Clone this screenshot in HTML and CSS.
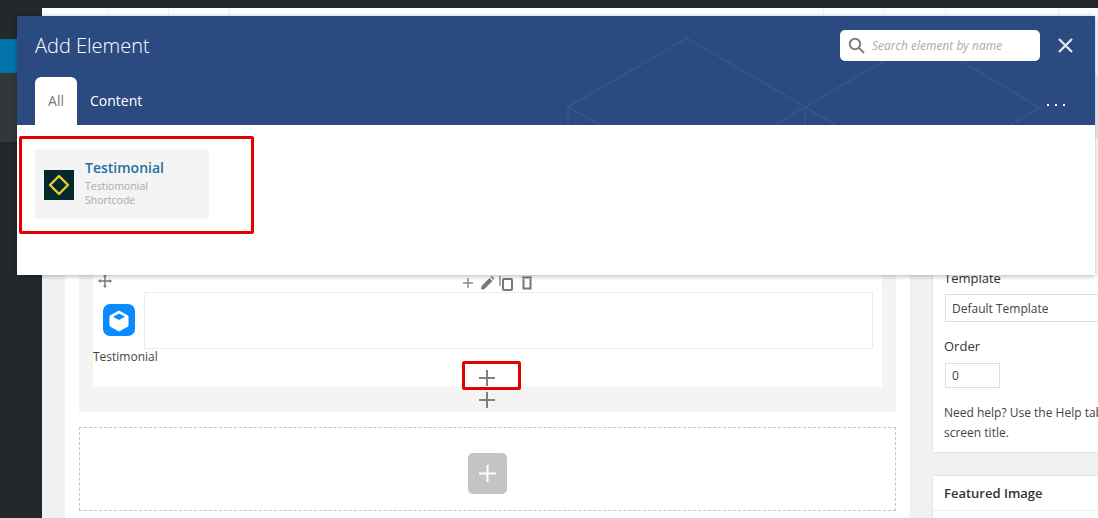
FILE: index.html
```html
<!DOCTYPE html>
<html lang="en">
<head>
<meta charset="utf-8"/>
<title>Add Element</title>
<link rel="stylesheet" href="styles.css">
</head>
<body>
<div class="admin-bar"></div>
<div class="layout">
  <div class="sidebar">
    <div class="menu-active"></div>
    <div class="menu-sub"></div>
  </div>
  <div class="content">
    <div class="toolbar">
      <span class="cell c1"></span><span class="cell c2"></span><span class="cell c3"></span>
      <span class="cell c4"></span><span class="cell c5"></span><span class="cell c6"></span><span class="cell c7"></span>
    </div>
    <div class="columns">
      <div class="main-box">
        <div class="section">
          <div class="row">
            <div class="row-controls">
              <svg class="move" width="14" height="14" viewBox="0 0 14 14"><path d="M7 0 9 2.500H7.700V6.300H11.500V5L14 7 11.500 9V7.700H7.700V11.500H9L7 14 5 11.500H6.300V7.700H2.500V9L0 7 2.500 5V6.300H6.300V2.500H5Z"/></svg>
              <div class="row-tools">
                <svg width="12" height="12" viewBox="0 0 12 12"><path d="M6 1V11M1 6H11" class="line"/></svg>
                <svg class="pencil" width="16" height="16" viewBox="0 0 16 16"><path d="M2 14.500 2.600 11 10.500 3 13.500 6 5.500 14ZM11.500 2 12.800 1 15 3.200 14.500 5Z"/></svg>
                <svg width="16" height="16" viewBox="0 0 16 16"><path d="M1 1V11" class="line"/><rect x="4" y="4" width="9" height="11" rx="1" class="thick"/></svg>
                <svg class="trash" width="12" height="14" viewBox="0 0 12 14"><path d="M1 0.500H11V2.500H1Z"/><path d="M2.500 3V12.500H9.500V3" class="thick"/></svg>
              </div>
            </div>
            <div class="row-body">
              <div class="element">
                <svg class="cube" width="32" height="32" viewBox="0 0 32 32">
                  <rect width="32" height="32" rx="7" fill="#0a8aff"/>
                  <path d="M16 7 25 12V22L16 27 7 22V12Z" fill="#fff" stroke="#fff" stroke-width="1" stroke-linejoin="round"/>
                  <path d="M16 9.500 22 12.800 16 16 10 12.800Z" fill="#0a8aff"/>
                </svg>
              </div>
              <div class="drop-area"></div>
            </div>
            <div class="element-name">Testimonial</div>
            <div class="row-add">
              <svg width="16" height="16" viewBox="0 0 16 16"><path d="M8 0V16M0 8H16" class="plus"/></svg>
            </div>
          </div>
          <div class="section-add">
            <svg width="16" height="16" viewBox="0 0 16 16"><path d="M8 0V16M0 8H16" class="plus"/></svg>
          </div>
        </div>
        <div class="empty-section">
          <div class="add-btn">
            <svg width="17" height="17" viewBox="0 0 17 17"><path d="M8.500 0V17M0 8.500H17" class="plus-white"/></svg>
          </div>
        </div>
      </div>
      <div class="side">
        <div class="panel attrs">
          <div class="field-label">Template</div>
          <div class="select-box">Default Template</div>
          <div class="field-label order-label">Order</div>
          <div class="order-input">0</div>
          <p class="help">Need help? Use the Help tab above the screen title.</p>
        </div>
        <div class="panel featured">
          <div class="panel-title">Featured Image</div>
        </div>
      </div>
    </div>
  </div>
</div>

<div class="modal">
  <div class="modal-head">
    <svg class="pattern" width="1078" height="109" viewBox="0 0 1078 109">
      <path d="M551 109V91L670 22 788 91V109M551 91 583 109M788 91 758 109M788 91 818 109M788 91 906 22 1023 92 993 109"/>
    </svg>
    <div class="head-top">
      <div class="modal-title">Add Element</div>
      <label class="search">
        <svg width="17" height="17" viewBox="0 0 17 17"><circle cx="7" cy="7" r="5.200"/><path d="M11 11 16 16"/></svg>
        <input type="text" placeholder="Search element by name"/>
      </label>
      <svg class="close" width="15" height="15" viewBox="0 0 15 15"><path d="M1 1 14 14M14 1 1 14"/></svg>
    </div>
    <div class="tabs">
      <div class="tab active">All</div>
      <div class="tab">Content</div>
      <div class="dots"><span></span><span></span><span></span></div>
    </div>
  </div>
  <div class="modal-body">
    <div class="el-card">
      <svg class="el-icon" width="30" height="30" viewBox="0 0 30 30">
        <rect width="30" height="30" fill="#04282c"/>
        <path d="M15 6 24 15 15 24 6 15Z" fill="none" stroke="#e6d02c" stroke-width="2.400" stroke-linejoin="round"/>
      </svg>
      <div class="el-text">
        <div class="el-title">Testimonial</div>
        <div class="el-desc">Testiomonial Shortcode</div>
      </div>
    </div>
  </div>
</div>
<div class="mark mark-card"></div>
<div class="mark mark-add"></div>
</body>
</html>
```

FILE: styles.css
```css
html, body {
  margin: 0;
  height: 518px;
  overflow: hidden;
}
body {
  position: relative;
  background: #f1f1f1;
  font-family: "Open Sans", sans-serif;
  font-size: 12px;
  color: #444;
}
.admin-bar {
  height: 8px;
  background: #23282d;
}
.layout {
  display: flex;
  height: 510px;
}
.sidebar {
  width: 42px;
  flex-shrink: 0;
  background: #23282d;
  padding-top: 31px;
  box-sizing: border-box;
}
.menu-active {
  height: 34px;
  background: #0073aa;
}
.menu-sub {
  height: 69px;
  background: #32373c;
}
.content {
  flex: 1;
  min-width: 0;
}
.toolbar {
  height: 69px;
  background: #fdfdfd;
  border-bottom: 1px solid #e5e5e5;
  box-sizing: border-box;
  display: flex;
}
.cell {
  height: 100%;
  border-right: 1px solid #f1f1f1;
  box-sizing: border-box;
}
.c1 { width: 66px; }
.c2, .c3 { width: 61px; }
.c4 { width: 594px; }
.c5, .c6 { width: 61px; }
.c7 { width: 113px; }

.columns {
  display: flex;
  padding: 60px 0 0 23px;
}
.main-box {
  width: 845px;
  flex-shrink: 0;
  height: 400px;
  background: #fff;
  box-sizing: border-box;
  padding: 103px 14px 0;
}
.section {
  background: #f4f4f4;
  padding: 15px 14px 0;
  height: 172px;
  box-sizing: border-box;
}
.row {
  background: #fff;
  height: 132px;
  padding-top: 18px;
  box-sizing: border-box;
}
.row-controls {
  display: flex;
  align-items: center;
  height: 19px;
  padding-left: 5px;
}
.row-controls svg {
  fill: #777;
  flex-shrink: 0;
}
.move {
  margin-top: -3px;
}
.row-tools {
  display: flex;
  align-items: center;
  gap: 4px;
  margin-left: 350px;
}
.pencil {
  margin-left: 1px;
}
.trash {
  margin-left: 2px;
}
.row-tools .line {
  fill: none;
  stroke: #888;
  stroke-width: 1.400;
}
.row-tools .thick {
  fill: none;
  stroke: #777;
  stroke-width: 2;
}
.row-body {
  display: flex;
  height: 57px;
}
.element {
  width: 51px;
  padding: 12px 0 0 10px;
  box-sizing: border-box;
}
.cube {
  display: block;
}
.drop-area {
  width: 729px;
  border: 1px dotted #d8d8d8;
  box-sizing: border-box;
}
.element-name {
  line-height: 16px;
  font-size: 12px;
  color: #444;
}
.row-add {
  display: flex;
  justify-content: center;
  margin-top: 5px;
  padding-right: 2px;
}
.section-add {
  display: flex;
  justify-content: center;
  padding: 5px 2px 0 0;
}
.plus {
  fill: none;
  stroke: #808080;
  stroke-width: 2;
}
.plus-white {
  fill: none;
  stroke: #fff;
  stroke-width: 2;
}
.empty-section {
  margin-top: 15px;
  height: 84px;
  border: 1px dashed #c4c4c4;
  box-sizing: border-box;
  display: flex;
  justify-content: center;
  padding-top: 25px;
}
.add-btn {
  width: 39px;
  height: 41px;
  background: #c4c4c4;
  border-radius: 5px;
  display: flex;
  align-items: center;
  justify-content: center;
}

.side {
  width: 280px;
  flex-shrink: 0;
  margin-left: 22px;
}
.panel {
  background: #fff;
  border: 1px solid #e5e5e5;
  box-sizing: border-box;
}
.attrs {
  height: 316px;
  padding: 131px 12px 0 11px;
}
.field-label {
  font-size: 13px;
  line-height: 18px;
  color: #333;
}
.select-box {
  margin: 7px 0 0 1px;
  height: 28px;
  line-height: 28px;
  border: 1px solid #ddd;
  padding-left: 6px;
  font-size: 12px;
  color: #444;
  box-sizing: border-box;
}
.order-label {
  margin-top: 15px;
}
.order-input {
  margin: 8px 0 0 1px;
  width: 55px;
  height: 25px;
  line-height: 23px;
  border: 1px solid #ddd;
  padding-left: 6px;
  font-size: 12px;
  box-sizing: border-box;
}
.help {
  margin: 15px 0 0;
  font-size: 12px;
  line-height: 20px;
  color: #444;
}
.featured {
  margin-top: 22px;
  height: 60px;
}
.panel-title {
  height: 35px;
  line-height: 34px;
  padding-left: 11px;
  font-size: 13px;
  font-weight: 600;
  color: #333;
  border-bottom: 1px solid #eee;
  box-sizing: border-box;
}

.modal {
  position: absolute;
  left: 17px;
  top: 16px;
  width: 1078px;
  height: 259px;
  background: #fff;
  box-shadow: 0 1px 5px rgba(0,0,0,0.3);
}
.modal-head {
  position: relative;
  height: 109px;
  background: #2b4b80;
  overflow: hidden;
}
.pattern {
  position: absolute;
  left: 0;
  top: 0;
}
.pattern path {
  fill: none;
  stroke: #375686;
  stroke-width: 1.500;
}
.head-top {
  position: relative;
  display: flex;
  align-items: center;
  height: 61px;
  padding: 0 0 2px 18px;
  box-sizing: border-box;
}
.modal-title {
  font-size: 20px;
  font-weight: 300;
  color: #fff;
}
.search {
  margin-left: auto;
  display: flex;
  align-items: center;
  gap: 7px;
  width: 200px;
  height: 31px;
  background: #fff;
  border-radius: 5px;
  padding-left: 8px;
  box-sizing: border-box;
}
.search svg {
  fill: none;
  stroke: #7d7d85;
  stroke-width: 2;
  flex-shrink: 0;
}
.search input {
  border: none;
  outline: none;
  background: none;
  padding: 0;
  width: 160px;
  font-family: "Open Sans", sans-serif;
  font-size: 12px;
  font-style: italic;
}
.search input::placeholder {
  color: #aaa;
  opacity: 1;
}
.close {
  margin: 0 22px 0 18px;
  stroke: #dfe5ee;
  stroke-width: 2.400;
  fill: none;
}
.tabs {
  position: relative;
  display: flex;
  height: 48px;
  padding-left: 18px;
}
.tab {
  padding: 0 13px;
  line-height: 48px;
  font-size: 14px;
  font-weight: 500;
  color: #fff;
}
.tab.active {
  width: 42px;
  padding: 0;
  text-align: center;
  background: #fff;
  color: #777;
  font-weight: 400;
  border-radius: 6px 6px 0 0;
}
.dots {
  display: flex;
  gap: 6px;
  margin: 27px 30px 0 auto;
}
.dots span {
  width: 2px;
  height: 2px;
  background: #fff;
}
.modal-body {
  padding: 24px 18px 0;
}
.el-card {
  display: flex;
  gap: 11px;
  width: 174px;
  height: 70px;
  background: #f4f4f4;
  padding: 21px 0 0 9px;
  box-sizing: border-box;
}
.el-icon {
  flex-shrink: 0;
}
.el-text {
  margin-top: -11px;
}
.el-title {
  font-size: 14px;
  font-weight: 600;
  line-height: 18px;
  margin-bottom: 2px;
  color: #24709f;
}
.el-desc {
  width: 90px;
  font-size: 10.500px;
  line-height: 14px;
  color: #aaa;
}
.mark {
  position: absolute;
  border: 3px solid #e30000;
  border-radius: 2px;
  box-sizing: border-box;
}
.mark-card {
  left: 19px;
  top: 136px;
  width: 235px;
  height: 98px;
}
.mark-add {
  left: 462px;
  top: 361px;
  width: 59px;
  height: 29px;
}
```
